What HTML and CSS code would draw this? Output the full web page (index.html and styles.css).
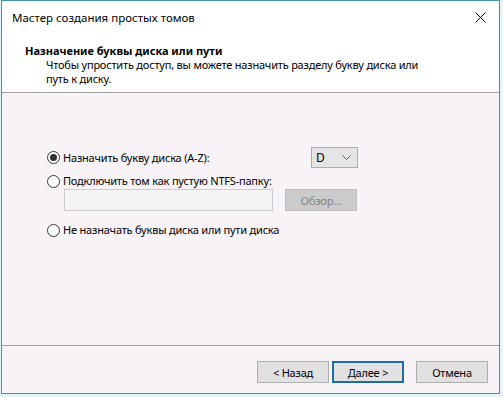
FILE: index.html
```html
<!DOCTYPE html>
<html lang="ru">
<head>
    <meta charset="UTF-8">
    <title>Мастер создания простых томов</title>
    <link rel="stylesheet" href="styles.css">
</head>
<body>
    <div class="window">
        <div class="titlebar">
            <span class="title">Мастер создания простых томов</span>
            <svg class="close" width="11" height="11" viewBox="0 0 11 11">
                <path d="M0.5 0.5 L10.5 10.5 M10.5 0.5 L0.5 10.5" stroke="#000" stroke-width="1" fill="none"/>
            </svg>
        </div>
        <div class="header">
            <div class="heading">Назначение буквы диска или пути</div>
            <div class="subheading">Чтобы упростить доступ, вы можете назначить разделу букву диска или<br>путь к диску.</div>
        </div>
        <div class="content">
            <div class="option-row">
                <label class="radio"><span class="circle checked"></span>Назначить букву диска (A-Z):</label>
                <div class="select">
                    <span>D</span>
                    <svg width="9" height="5" viewBox="0 0 9 5">
                        <path d="M0.5 0.5 L4.5 4.5 L8.5 0.5" stroke="#555" stroke-width="1" fill="none"/>
                    </svg>
                </div>
            </div>
            <label class="radio second"><span class="circle"></span>Подключить том как пустую NTFS-папку:</label>
            <div class="path-row">
                <div class="path-input"></div>
                <button class="btn disabled">Обзор...</button>
            </div>
            <label class="radio third"><span class="circle"></span>Не назначать буквы диска или пути диска</label>
        </div>
        <div class="footer">
            <button class="btn">&lt; Назад</button>
            <button class="btn default">Далее &gt;</button>
            <button class="btn cancel">Отмена</button>
        </div>
    </div>
</body>
</html>
```

FILE: styles.css
```css
body {
    margin: 0;
    padding: 0;
    background-color: #e3f6f9;
    font-family: 'Noto Sans', 'Open Sans', sans-serif;
    font-size: 11px;
    letter-spacing: -0.2px;
    color: #000;
}
.window {
    margin-left: 1px;
    width: 497px;
    height: 392px;
    border: 1px solid #46909f;
    background: #f8f3f7;
    display: flex;
    flex-direction: column;
}
.titlebar {
    height: 32px;
    background: #fff;
    display: flex;
    align-items: center;
    justify-content: space-between;
    padding: 1px 13px 0 10px;
    box-sizing: border-box;
}
.title {
    font-size: 11.5px;
    letter-spacing: 0;
}
.header {
    background: #fff;
    height: 60px;
    box-sizing: border-box;
    padding-top: 10px;
    border-bottom: 1px solid #a0a0a0;
}
.heading {
    font-weight: bold;
    letter-spacing: 0;
    line-height: 15px;
    padding-left: 23px;
}
.subheading {
    line-height: 14px;
    padding-left: 44px;
}
.content {
    height: 253px;
    box-sizing: border-box;
    padding: 54px 0 0 45px;
    border-bottom: 1px solid #a0a0a0;
}
.option-row {
    width: 311px;
    height: 21px;
    display: flex;
    align-items: center;
    justify-content: space-between;
}
.radio {
    display: flex;
    align-items: center;
    gap: 3px;
    height: 16px;
    line-height: 16px;
}
.radio.second {
    margin-top: 5px;
}
.radio.third {
    margin-top: 11px;
}
.circle {
    width: 11px;
    height: 11px;
    border: 1px solid #333;
    border-radius: 50%;
    background: #fff;
    position: relative;
}
.circle.checked::after {
    content: '';
    position: absolute;
    left: 2px;
    top: 2px;
    width: 7px;
    height: 7px;
    border-radius: 50%;
    background: #333;
}
.select {
    width: 47px;
    height: 21px;
    box-sizing: border-box;
    border: 1px solid #acacac;
    background: #e5e5e5;
    display: flex;
    align-items: center;
    justify-content: space-between;
    padding: 0 6px 0 4px;
    font-size: 12px;
}
.path-row {
    display: flex;
    gap: 12px;
    margin-left: 17px;
}
.path-input {
    width: 209px;
    height: 22px;
    box-sizing: border-box;
    border: 1px solid #cccccc;
    background: #f7f4f7;
}
.btn {
    width: 72px;
    height: 22px;
    box-sizing: border-box;
    border: 1px solid #adadad;
    background: #e1e1e1;
    font-family: inherit;
    font-size: 11px;
    letter-spacing: -0.2px;
    color: #000;
    padding: 0;
}
.btn.disabled {
    background: #cccccc;
    border-color: #bfbfbf;
    color: #838383;
}
.btn.default {
    border: 2px solid #1f6ea3;
}
.footer {
    flex: 1;
    display: flex;
    justify-content: flex-end;
    align-items: flex-start;
    gap: 3px;
    padding: 15px 11px 0 0;
}
.btn.cancel {
    margin-left: 9px;
}
```
